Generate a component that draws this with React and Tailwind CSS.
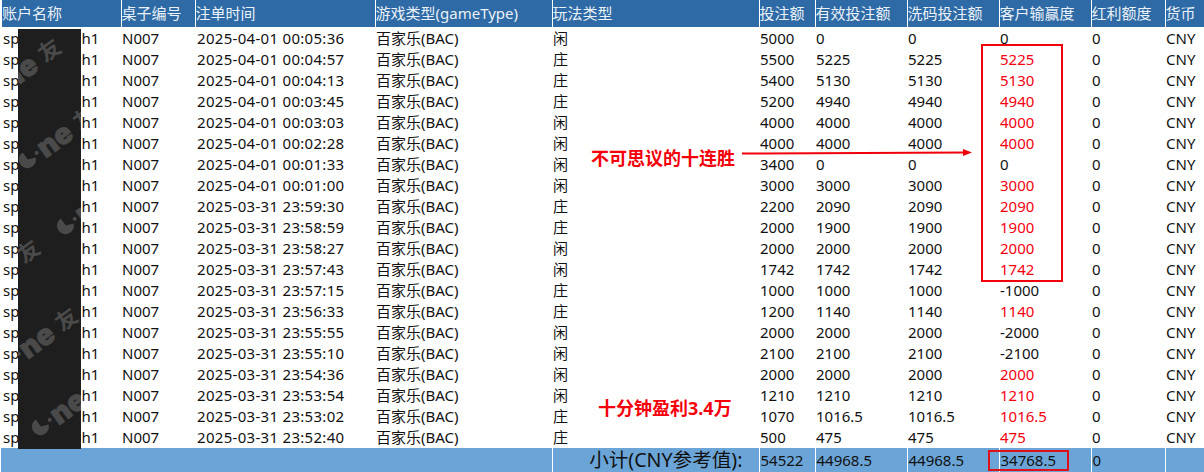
const rows = [
  ["2025-04-01 00:05:36","闲","5000","0","0","0",0],
  ["2025-04-01 00:04:57","庄","5500","5225","5225","5225",1],
  ["2025-04-01 00:04:13","庄","5400","5130","5130","5130",1],
  ["2025-04-01 00:03:45","庄","5200","4940","4940","4940",1],
  ["2025-04-01 00:03:03","闲","4000","4000","4000","4000",1],
  ["2025-04-01 00:02:28","闲","4000","4000","4000","4000",1],
  ["2025-04-01 00:01:33","闲","3400","0","0","0",0],
  ["2025-04-01 00:01:00","闲","3000","3000","3000","3000",1],
  ["2025-03-31 23:59:30","庄","2200","2090","2090","2090",1],
  ["2025-03-31 23:58:59","庄","2000","1900","1900","1900",1],
  ["2025-03-31 23:58:27","闲","2000","2000","2000","2000",1],
  ["2025-03-31 23:57:43","闲","1742","1742","1742","1742",1],
  ["2025-03-31 23:57:15","庄","1000","1000","1000","-1000",0],
  ["2025-03-31 23:56:33","庄","1200","1140","1140","1140",1],
  ["2025-03-31 23:55:55","闲","2000","2000","2000","-2000",0],
  ["2025-03-31 23:55:10","闲","2100","2100","2100","-2100",0],
  ["2025-03-31 23:54:36","闲","2000","2000","2000","2000",1],
  ["2025-03-31 23:53:54","闲","1210","1210","1210","1210",1],
  ["2025-03-31 23:53:02","庄","1070","1016.5","1016.5","1016.5",1],
  ["2025-03-31 23:52:40","庄","500","475","475","475",1],
];
const headers = ["账户名称","桌子编号","注单时间","游戏类型(gameType)","玩法类型","投注额","有效投注额","洗码投注额","客户输赢度","红利额度","货币"];
const widths = [120,74,180,177,207,56,92,92,92,74,40];
const font = { fontFamily: '"Noto Sans","Noto Sans CJK SC",sans-serif' };

function Mark({ x, y }) {
  return (
    <g transform={`translate(${x} ${y}) rotate(-36)`} fill="#4a4a4a">
      <path d="M1 -8.5 A8.5 8.5 0 1 0 8.5 3 L1 0 Z" />
      <circle cx="12" cy="0" r="2" />
      <text x="16" y="10" fontSize="29" fontWeight="900" stroke="#4a4a4a" strokeWidth="0.8" fontFamily="Inter, sans-serif">ne</text>
      <text x="60" y="8" fontSize="22" fontWeight="700" fontFamily="Noto Sans CJK SC, sans-serif">友</text>
    </g>
  );
}

export default function App() {
  return (
    <div className="relative w-[1204px] h-[472px] overflow-hidden bg-white text-[15px] text-[#111]" style={font}>
      <table className="w-[1204px] table-fixed border-collapse">
        <colgroup>
          {widths.map((w, i) => <col key={i} style={{ width: w }} />)}
        </colgroup>
        <thead>
          <tr className="h-[27px] bg-[#2e6aa5] text-[#eaf1f8]">
            {headers.map((h, i) => (
              <th key={h} className={`border-white p-0 text-left align-middle font-normal leading-none whitespace-nowrap ${i === 0 ? "border-l-2" : "border-l"} ${i === 2 ? "" : ""}`}>{h}</th>
            ))}
          </tr>
        </thead>
        <tbody>
          <tr className="h-px"><td colSpan={11} className="p-0 h-px"></td></tr>
          {rows.map((r, i) => (
            <tr key={i} className="h-[21px]">
              <td className="p-0 pl-[2px] leading-none whitespace-nowrap">sp<span className="ml-[62px]">h1</span></td>
              <td className="p-0 pl-px leading-none">N007</td>
              <td className="p-0 pl-[2px] leading-none whitespace-nowrap tracking-[0.3px]">{r[0]}</td>
              <td className="p-0 pl-px leading-none">百家乐(BAC)</td>
              <td className="p-0 pl-px leading-none">{r[1]}</td>
              <td className="p-0 pl-px leading-none">{r[2]}</td>
              <td className="p-0 pl-px leading-none">{r[3]}</td>
              <td className="p-0 pl-px leading-none">{r[4]}</td>
              <td className={`p-0 pl-px leading-none ${r[6] ? "text-[#f5000f]" : ""}`}>{r[5]}</td>
              <td className="p-0 pl-px leading-none">0</td>
              <td className="p-0 pl-px leading-none">CNY</td>
            </tr>
          ))}
          <tr className="h-[24px] bg-[#6ba5d7]">
            <td colSpan={4} className="p-0"></td>
            <td className="border-l border-white p-0 pr-[16px] text-right text-[19.6px] leading-none whitespace-nowrap">小计(CNY参考值):</td>
            <td className="border-l border-white p-0 pl-px leading-none">54522</td>
            <td className="border-l border-white p-0 pl-px leading-none">44968.5</td>
            <td className="border-l border-white p-0 pl-px leading-none">44968.5</td>
            <td className="border-l border-white p-0 pl-px leading-none">34768.5</td>
            <td className="border-l border-white p-0 pl-px leading-none">0</td>
            <td className="border-l border-white p-0"></td>
          </tr>
        </tbody>
      </table>

      <div className="absolute left-[18px] top-[29px] h-[420px] w-[63px] overflow-hidden bg-[#1e1e1e]">
        <svg width="63" height="420" className="block">
          <Mark x={-26} y={63} />
          <Mark x={9} y={131} />
          <Mark x={47} y={197} />
          <Mark x={-47} y={264} />
          <Mark x={-9} y={332} />
          <Mark x={22} y={398} />
        </svg>
      </div>

      <div className="absolute left-[981px] top-[44px] h-[238px] w-[82px] border-2 border-[#f0000a]"></div>
      <div className="absolute left-[988px] top-[450px] h-[21px] w-[81px] border-2 border-[#e0101a]"></div>

      <div className="absolute left-[591px] top-[147px] text-[18px] font-bold leading-[22px] text-[#f5000a] whitespace-nowrap">不可思议的十连胜</div>
      <div className="absolute left-[598px] top-[397px] text-[18px] font-bold leading-[22px] text-[#f5000a] whitespace-nowrap">十分钟盈利3.4万</div>

      <svg className="absolute left-[740px] top-[148px]" width="235" height="10">
        <line x1="2" y1="5.5" x2="225" y2="4.5" stroke="#f0000a" strokeWidth="2" />
        <path d="M223 1 L232 4.5 L223 8 Z" fill="#f0000a" />
      </svg>
    </div>
  );
}
